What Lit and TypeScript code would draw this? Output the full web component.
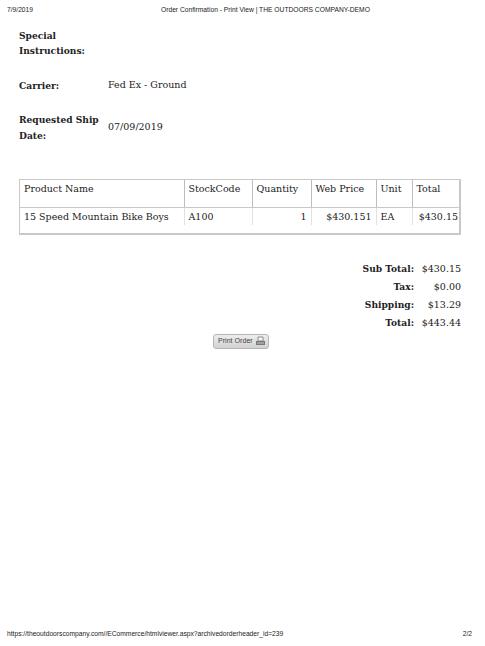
import { LitElement, html, css } from "lit";
import { customElement } from "lit/decorators.js";

@customElement("app-root")
export class AppRoot extends LitElement {
  static styles = css`
    :host {
      display: block;
      width: 485px;
      height: 646px;
      background: #fff;
      color: #222;
      font-family: "DejaVu Serif", serif;
      font-size: 9.5px;
      overflow: hidden;
    }
    .page {
      height: 646px;
      box-sizing: border-box;
      display: flex;
      flex-direction: column;
      padding: 5px 13px 8px 7px;
    }
    .bar {
      display: grid;
      grid-template-columns: 154px auto 1fr;
      font: 6.7px/9px "Liberation Sans", sans-serif;
      color: #222;
      white-space: nowrap;
    }
    .bar.foot { grid-template-columns: 1fr auto; }
    .main {
      flex: 1;
      padding: 13px 11px 0 12px;
      display: flex;
      flex-direction: column;
    }
    .info {
      display: grid;
      grid-template-columns: 89px 1fr;
      row-gap: 19px;
      align-items: center;
      line-height: 15.4px;
    }
    .label { font-weight: 700; font-size: 9.1px; color: #222; }
    .info .label { padding-top: 1px; margin-bottom: -1px; }
    .box {
      margin-top: 37px;
      border: 1px solid #c8c8c8;
      border-width: 1px 2px 2px 1px;
      padding-bottom: 8px;
    }
    table {
      width: 100%;
      border-collapse: collapse;
      table-layout: fixed;
    }
    col.c1 { width: 164px; }
    col.c2 { width: 68px; }
    col.c3 { width: 59px; }
    col.c4 { width: 65px; }
    col.c5 { width: 36px; }
    th, td {
      font-weight: 400;
      padding: 0 4px;
      text-align: left;
      white-space: nowrap;
    }
    th {
      height: 27px;
      padding-bottom: 9px;
      box-sizing: border-box;
      border-bottom: 1px solid #c8c8c8;
      border-right: 1px solid #bdbdbd;
    }
    td {
      height: 17px;
      border-right: 1px solid #e2e2e2;
    }
    th:last-child, td:last-child { border-right: none; }
    td:last-child { padding-right: 1px; }
    .r { text-align: right; }
    .totals {
      margin-top: 26px;
      align-self: flex-end;
      display: grid;
      grid-template-columns: auto 47px;
      grid-auto-rows: 17.8px;
      align-items: center;
      line-height: 14px;
    }
    .totals .label { text-align: right; }
    .totals .val { text-align: right; }
    .action {
      margin-top: 2px;
      margin-left: 194px;
    }
    .btn {
      display: inline-flex;
      align-items: center;
      gap: 2px;
      box-sizing: border-box;
      width: 56px;
      height: 15px;
      padding: 0 0 0 4px;
      border: 1px solid #b5b5b5;
      border-radius: 3px;
      background: linear-gradient(#ededed, #d2d2d2);
      font: 400 7.1px "Liberation Sans", sans-serif;
      color: #444;
      white-space: nowrap;
    }
    .btn svg { display: block; flex: none; }
  `;

  render() {
    return html`
      <div class="page">
        <div class="bar">
          <span>7/9/2019</span>
          <span>Order Confirmation - Print View | THE OUTDOORS COMPANY-DEMO</span>
          <span></span>
        </div>
        <div class="main">
          <div class="info">
            <div class="label">Special<br />Instructions:</div>
            <div></div>
            <div class="label">Carrier:</div>
            <div>Fed Ex - Ground</div>
            <div class="label">Requested Ship<br />Date:</div>
            <div>07/09/2019</div>
          </div>
          <div class="box">
            <table>
              <colgroup>
                <col class="c1" /><col class="c2" /><col class="c3" />
                <col class="c4" /><col class="c5" /><col />
              </colgroup>
              <tr>
                <th>Product Name</th><th>StockCode</th><th>Quantity</th>
                <th>Web Price</th><th>Unit</th><th>Total</th>
              </tr>
              <tr>
                <td>15 Speed Mountain Bike Boys</td><td>A100</td><td class="r">1</td>
                <td class="r">$430.151</td><td>EA</td><td class="r">$430.15</td>
              </tr>
            </table>
          </div>
          <div class="totals">
            <div class="label">Sub Total:</div><div class="val">$430.15</div>
            <div class="label">Tax:</div><div class="val">$0.00</div>
            <div class="label">Shipping:</div><div class="val">$13.29</div>
            <div class="label">Total:</div><div class="val">$443.44</div>
          </div>
          <div class="action">
            <button class="btn">
              Print Order
              <svg width="11" height="10" viewBox="0 0 11 10">
                <path d="M3 1h5v4H3z" fill="#f4f4f4" stroke="#777" stroke-width=".8" />
                <path d="M1 5h9v4H1z" fill="#777" />
                <path d="M2 7h7" stroke="#ddd" stroke-width=".8" />
              </svg>
            </button>
          </div>
        </div>
        <div class="bar foot">
          <span>https://theoutdoorscompany.com//ECommerce/htmlviewer.aspx?archivedorderheader_id=239</span>
          <span>2/2</span>
        </div>
      </div>
    `;
  }
}
